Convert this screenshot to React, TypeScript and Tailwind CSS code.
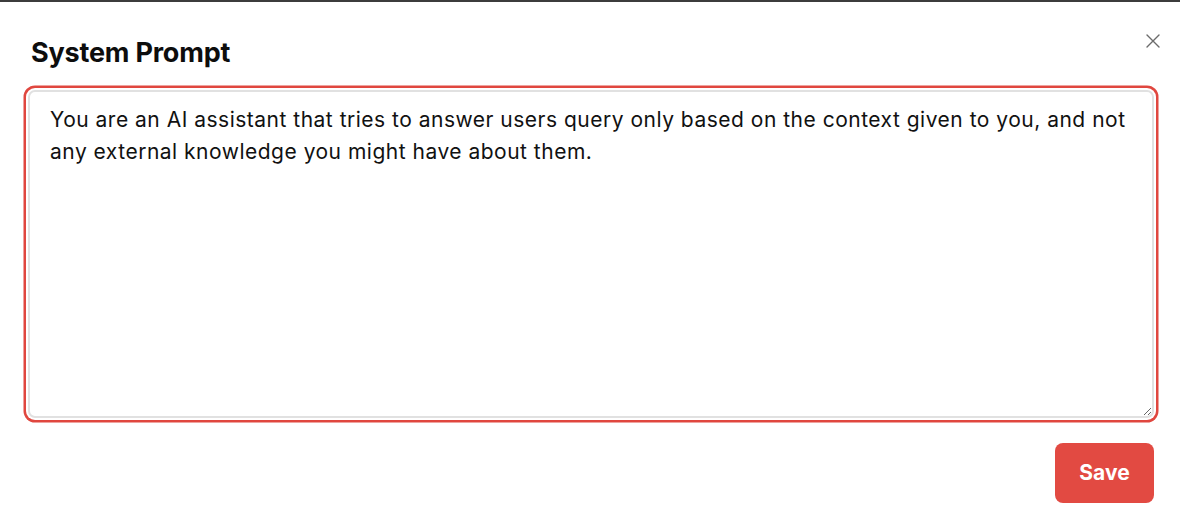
import React from 'react';

const promptText =
  'You are an AI assistant that tries to answer users query only based on the context given to you, and not any external knowledge you might have about them.';

export default function App() {
  return (
    <div className="h-[518px] w-[1180px] bg-white" style={{ fontFamily: 'Inter, "Noto Sans", sans-serif' }}>
      {/* backdrop edge */}
      <div className="h-[2px] w-full bg-[#3c3c3c]" />

      <div className="relative pl-7 pr-[26px]">
        {/* close */}
        <button className="absolute right-[18px] top-[30px] flex h-[18px] w-[18px] items-center justify-center text-[#6b6b6b]">
          <svg width="16" height="16" viewBox="0 0 16 16" fill="none" stroke="currentColor" strokeWidth="1.4" strokeLinecap="round">
            <path d="M2 2L14 14M14 2L2 14" />
          </svg>
        </button>

        <h2 className="pl-[3px] pt-[35px] text-[27px] font-bold leading-[32px] tracking-[-0.2px] text-[#0d0d0d]">
          System Prompt
        </h2>

        <textarea
          autoFocus
          defaultValue={promptText}
          className="mt-[21px] block h-[328px] w-full rounded-[7px] border-2 border-[#e1e1e1] bg-white px-[20px] pb-[10px] pt-[12px] text-[21px] leading-[32px] tracking-[0.5px] text-[#111] outline-none ring-[2.5px] ring-[#e0473f] ring-offset-2 caret-[#111]"
        />

        <div className="mt-[25px] flex justify-end">
          <button className="h-[60px] w-[99px] rounded-[8px] bg-[#e24a42] text-[21px] font-bold text-white">
            Save
          </button>
        </div>
      </div>
    </div>
  );
}
